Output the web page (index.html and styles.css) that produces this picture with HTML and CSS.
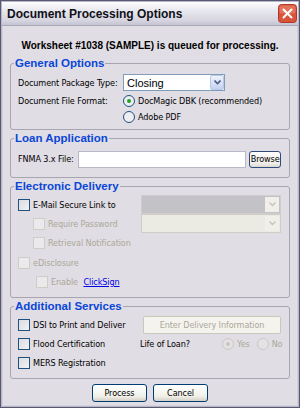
FILE: index.html
```html
<!DOCTYPE html>
<html>
<head>
<meta charset="utf-8">
<link rel="stylesheet" href="styles.css">
</head>
<body>
<div class="window">
  <div class="titlebar">
    <span class="title">Document Processing Options</span>
    <span class="close"><svg width="19" height="19" viewBox="0 0 19 19"><rect x="0.5" y="0.5" width="18" height="18" rx="3" fill="#d9533b" stroke="#b03828"/><rect x="1.5" y="1.5" width="16" height="8" rx="2" fill="#e88870" opacity="0.6"/><path d="M5.5 5.5 L13.5 13.5 M13.5 5.5 L5.5 13.5" stroke="#fff" stroke-width="2" stroke-linecap="round"/></svg></span>
  </div>
  <div class="content">
    <p class="headline">Worksheet #1038 (SAMPLE) is queued for processing.</p>

    <fieldset class="group">
      <legend>General Options</legend>
      <div class="form-grid">
        <span class="label">Document Package Type:</span>
        <span class="select"><span class="select-text">Closing</span><span class="select-btn"><svg width="7" height="5" viewBox="0 0 7 5"><path d="M0.5 0.5 L3.5 3.5 L6.5 0.5" fill="none" stroke="#4d6185" stroke-width="1.6"/></svg></span></span>
        <span class="label">Document File Format:</span>
        <span class="radio-row"><span class="radio checked"></span>DocMagic DBK (recommended)</span>
        <span></span>
        <span class="radio-row"><span class="radio"></span>Adobe PDF</span>
      </div>
    </fieldset>

    <fieldset class="group">
      <legend>Loan Application</legend>
      <div class="file-row">
        <span class="label">FNMA 3.x File:</span>
        <span class="textbox"></span>
        <span class="browse">Browse</span>
      </div>
    </fieldset>

    <fieldset class="group">
      <legend>Electronic Delivery</legend>
      <div class="ed">
        <div class="ed-row">
          <span class="check-row"><span class="check"></span>E-Mail Secure Link to</span>
          <span class="dselect dark"><span class="dselect-btn"><svg width="7" height="5" viewBox="0 0 7 5"><path d="M0.5 0.5 L3.5 3.5 L6.5 0.5" fill="none" stroke="#c5c2b8" stroke-width="1.4"/></svg></span></span>
        </div>
        <div class="ed-row indent1">
          <span class="check-row disabled"><span class="check off"></span>Require Password</span>
          <span class="dselect"><span class="dselect-btn"><svg width="7" height="5" viewBox="0 0 7 5"><path d="M0.5 0.5 L3.5 3.5 L6.5 0.5" fill="none" stroke="#c5c2b8" stroke-width="1.4"/></svg></span></span>
        </div>
        <div class="ed-row indent1">
          <span class="check-row disabled"><span class="check off"></span>Retrieval Notification</span>
        </div>
        <div class="ed-row">
          <span class="check-row disabled"><span class="check off"></span>eDisclosure</span>
        </div>
        <div class="ed-row indent2">
          <span class="check-row disabled"><span class="check off"></span>Enable&nbsp;<a class="link" href="#">ClickSign</a></span>
        </div>
      </div>
    </fieldset>

    <fieldset class="group">
      <legend>Additional Services</legend>
      <div class="as">
        <span class="check-row"><span class="check"></span>DSI to Print and Deliver</span>
        <span class="dbutton">Enter Delivery Information</span>
        <span class="check-row"><span class="check"></span>Flood Certification</span>
        <span class="life"><span class="life-label">Life of Loan?</span><span class="radio-row disabled"><span class="radio off dotted"></span>Yes</span><span class="radio-row disabled"><span class="radio off"></span>No</span></span>
        <span class="check-row"><span class="check"></span>MERS Registration</span>
        <span></span>
      </div>
    </fieldset>

    <div class="actions">
      <span class="button">Process</span>
      <span class="button">Cancel</span>
    </div>
  </div>
</div>
</body>
</html>
```

FILE: styles.css
```css
* { box-sizing: border-box; }
html, body { margin: 0; padding: 0; }
body {
  width: 300px;
  height: 408px;
  font-family: "DejaVu Sans Condensed", "Liberation Sans", Arial, sans-serif;
  font-size: 9px;
  letter-spacing: -0.1px;
  color: #000;
  background: #e0dfe3;
}
.window {
  width: 300px;
  height: 408px;
  border: 1px solid #585870;
  box-shadow: inset 0 0 0 1px #b6b6c8, inset 0 0 0 2px #d4d3dc;
  display: flex;
  flex-direction: column;
  background: #e0dde4;
}
.titlebar {
  height: 24px;
  margin: 1px 1px 0 1px;
  display: flex;
  align-items: center;
  justify-content: space-between;
  padding: 0 1px 0 5px;
  background: linear-gradient(#fdfdfe 0%, #e9e9f0 35%, #d6d5e0 80%, #c4c3d2 100%);
  border-bottom: 1px solid #a9a8b8;
}
.title {
  font-family: "Liberation Sans", Arial, sans-serif;
  font-weight: bold;
  font-size: 12px;
  letter-spacing: 0;
  color: #101018;
}
.close { display: flex; }
.content {
  flex: 1;
  padding: 11px 9px 0 9px;
  display: flex;
  flex-direction: column;
}
.headline {
  font-family: "Liberation Sans", Arial, sans-serif;
  margin: 0 0 1px 0;
  text-align: center;
  font-weight: bold;
  font-size: 10px;
  letter-spacing: 0;
  line-height: 18px;
}
.group {
  margin: 0 0 1px 0;
  padding: 0 8px 6px 7px;
  border: 1px solid #a7a6b0;
  border-radius: 3px;
  min-width: 0;
}
.group legend {
  font-family: "Liberation Sans", Arial, sans-serif;
  padding: 0 1px;
  margin-left: -4px;
  color: #0a46d8;
  font-weight: bold;
  font-size: 11.5px;
  letter-spacing: 0;
  line-height: 14px;
}
.form-grid {
  display: grid;
  grid-template-columns: 105px 1fr;
  grid-template-rows: 19px 17px 16px;
  align-items: center;
  padding-top: 3px;
  margin-bottom: -2px;
}
.label { white-space: nowrap; }
.select {
  width: 102px;
  height: 17px;
  border: 1px solid #7f9db9;
  background: #fff;
  display: flex;
  align-items: center;
  justify-content: space-between;
  font-family: "Liberation Sans", Arial, sans-serif;
  font-size: 11px;
  letter-spacing: 0;
}
.select-text { padding-left: 3px; }
.select-btn {
  width: 14px;
  height: 15px;
  background: linear-gradient(#eef2fb, #c6d3f0);
  border: 1px solid #b9c8e8;
  border-radius: 2px;
  display: flex;
  align-items: center;
  justify-content: center;
}
.radio-row {
  display: flex;
  align-items: center;
  gap: 3px;
  white-space: nowrap;
}
.radio-row.disabled { color: #aca899; }
.radio {
  width: 12px;
  height: 12px;
  border-radius: 50%;
  border: 1px solid #1c5180;
  background: #eeedf1;
  display: inline-flex;
  align-items: center;
  justify-content: center;
  flex: none;
}
.radio.checked::after {
  content: "";
  width: 4px;
  height: 4px;
  border-radius: 50%;
  background: #21a121;
}
.radio.off { border-color: #cac8bb; background: #e4e2e6; }
.radio.off.dotted::after {
  content: "";
  width: 4px;
  height: 4px;
  border-radius: 50%;
  background: #cac8bb;
}
.file-row {
  display: flex;
  align-items: center;
  height: 20px;
  margin-top: 4px;
  margin-bottom: 2px;
}
.file-row .label { width: 60px; }
.textbox {
  width: 170px;
  height: 17px;
  background: #fff;
  border: 1px solid #b7bac6;
}
.browse {
  margin-left: 3px;
  height: 17px;
  width: 32px;
  border: 1px solid #2f4b77;
  border-radius: 3px;
  background: linear-gradient(#ffffff, #ecebe6 80%, #d8d7d0);
  display: flex;
  align-items: center;
  justify-content: center;
}
.ed { padding-top: 2px; }
.ed-row {
  display: flex;
  align-items: center;
  justify-content: space-between;
  height: 19.3px;
}
.indent1 { padding-left: 15px; }
.indent2 { padding-left: 18px; }
.check-row {
  display: flex;
  align-items: center;
  gap: 3px;
  white-space: nowrap;
}
.check-row.disabled { color: #aca899; }
.check {
  width: 12px;
  height: 12px;
  border: 1px solid #1c5180;
  background: linear-gradient(135deg, #dcdbe0, #f2f2f4);
  flex: none;
}
.check.off { border-color: #cfcdc4; background: #ebe9ec; }
.link { color: #0000ee; text-decoration: underline; }
.dselect {
  width: 140px;
  height: 19px;
  border: 1px solid #cfcdc4;
  background: #ecebe3;
  display: flex;
  justify-content: flex-end;
  align-items: center;
  padding-right: 1px;
}
.dselect.dark { background: #c3c2c6; border-color: #cfcdd0; }
.dselect-btn {
  width: 14px;
  height: 15px;
  background: #f0efea;
  display: flex;
  align-items: center;
  justify-content: center;
}
.as {
  display: grid;
  grid-template-columns: 122px 1fr;
  grid-auto-rows: 19px;
  align-items: center;
  padding-top: 2px;
}
.dbutton {
  margin-left: 3px;
  width: 138px;
  height: 18px;
  border: 1px solid #cac8bb;
  border-radius: 2px;
  background: #f4f3ee;
  color: #aca899;
  display: flex;
  align-items: center;
  justify-content: center;
  white-space: nowrap;
}
.life {
  display: flex;
  align-items: center;
}
.life-label { width: 82px; }
.life .radio-row { margin-right: 7px; }
.actions {
  display: flex;
  justify-content: center;
  gap: 6px;
  margin-top: 4px;
}
.button {
  width: 55px;
  height: 18px;
  border: 1px solid #003c74;
  border-radius: 3px;
  background: linear-gradient(#ffffff, #f0f0ea 70%, #d6d0c5);
  display: flex;
  align-items: center;
  justify-content: center;
}
```
